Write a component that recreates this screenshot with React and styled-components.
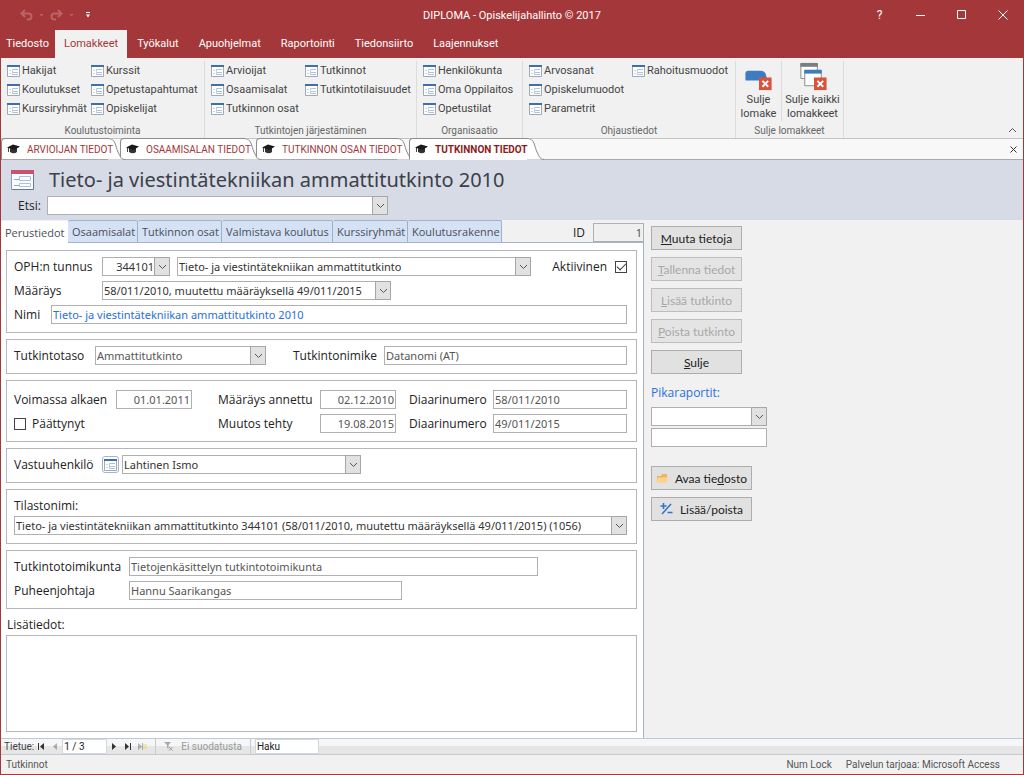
import React from "react";
import styled, { createGlobalStyle, css } from "styled-components";

const ui = `"Open Sans", "Noto Sans", sans-serif`;
const chromeFont = `Roboto, "Open Sans", sans-serif`;
const fieldFont = `"Noto Sans", "Open Sans", sans-serif`;
const buttonFont = `Lato, "Open Sans", sans-serif`;
const red = "#a4373a";

const GlobalStyle = createGlobalStyle`
  * {
    box-sizing: border-box;
  }
  body {
    margin: 0;
    font-family: ${ui};
    font-size: 12px;
    color: #222;
  }
  button, input, select, textarea {
    font: inherit;
    color: inherit;
    margin: 0;
    padding: 0;
    border: 0;
    border-radius: 0;
    background: none;
    outline: none;
  }
`;

const Window = styled.div`
  display: flex;
  flex-direction: column;
  min-height: 100vh;
  background: #f1f1f1;
  border: 1px solid ${red};
  border-top: 0;
`;

/* title bar */

const TitleBar = styled.header`
  display: grid;
  grid-template-columns: 1fr auto 1fr;
  align-items: center;
  height: 30px;
  font-family: ${chromeFont};
  background: ${red};
  color: #fff;
`;

const Title = styled.h1`
  margin: 0;
  font-size: 11px;
  font-weight: 400;
`;

const QuickAccess = styled.div`
  display: flex;
  align-items: center;
  padding-left: 19px;
`;

const IconButton = styled.button`
  display: flex;
  align-items: center;
  justify-content: center;
`;

const WindowButtons = styled.div`
  display: flex;
  justify-content: flex-end;

  button {
    width: 41px;
    height: 28px;
  }
`;

/* ribbon */

const MenuTabs = styled.nav`
  display: flex;
  height: 28px;
  font-family: ${chromeFont};
  background: ${red};
`;

const MenuTab = styled.button`
  padding: ${(p) => (p.$first ? "0 6px 0 5px" : p.$active ? "0 9px" : "0 10px")};
  font-size: 11px;
  line-height: 28px;
  color: ${(p) => (p.$active ? red : "#fff")};
  background: ${(p) => (p.$active ? "#f1f1f1" : "none")};
`;

const Ribbon = styled.div`
  display: flex;
  height: 80px;
  padding-top: 3px;
  font-family: ${chromeFont};
`;

const Group = styled.section`
  display: flex;
  flex-direction: column;
  justify-content: space-between;
  width: ${(p) => p.$w}px;
  border-right: 1px solid #dcdcdc;
`;

const GroupTitle = styled.h2`
  margin: 0;
  font-size: 10px;
  font-weight: 400;
  line-height: 15px;
  text-align: center;
  color: #666;
`;

const Commands = styled.div`
  display: grid;
  grid-template-rows: repeat(3, 19px);
  grid-template-columns: ${(p) => p.$cols};
  grid-auto-flow: column;
  padding-left: 6px;
`;

const Command = styled.button`
  display: flex;
  align-items: center;
  gap: 2px;
  font-size: 11px;
  white-space: nowrap;
  color: #444;
`;

const BigCommands = styled.div`
  display: flex;
  height: 60px;
`;

const BigCommand = styled.button`
  display: flex;
  flex-direction: column;
  align-items: center;
  width: ${(p) => p.$w}px;
  font-size: 11px;
  line-height: 14px;
  color: #444;

  & + & {
    border-left: 1px solid #dcdcdc;
  }
`;

const Collapse = styled(IconButton)`
  align-self: flex-end;
  width: 20px;
  height: 16px;
  margin: 0 1px 0 auto;
`;

/* document tabs */

const DocTabs = styled.nav`
  display: flex;
  height: 22px;
  font-family: ${chromeFont};
  background: #f8f8f8;
  border-top: 1px solid #c4c4c4;
  border-bottom: 1px solid #a8a8a8;
`;

const DocTab = styled.button`
  position: relative;
  z-index: ${(p) => p.$z};
  display: flex;
  align-items: center;
  width: ${(p) => p.$w}px;
  height: 22px;
  margin: -1px 0;
  font-size: 10px;
  font-weight: ${(p) => (p.$active ? 700 : 400)};
  color: ${(p) => (p.$active ? "#8c1c22" : red)};

  & + & {
    margin-left: -5px;
  }
  svg {
    flex: none;
  }
`;

/* long captions run on over the slanted edge */
const DocTabBody = styled.span`
  position: relative;
  z-index: 1;
  display: flex;
  flex: 1;
  align-items: center;
  gap: 6px;
  min-width: 0;
  height: 22px;
  padding-left: 5px;
  white-space: nowrap;
  background: #fff;
  border: 1px solid #8c8c8c;
  border-right: 0;
  border-bottom-color: ${(p) => (p.$active ? "#fff" : "#a8a8a8")};
  border-top-left-radius: 4px;
`;

const CloseTab = styled(IconButton)`
  width: 20px;
  margin-left: auto;
`;

/* form header */

const FormHeader = styled.div`
  display: flex;
  flex-direction: column;
  height: 60px;
  background: #d6dbe6;
`;

const FormTitle = styled.div`
  display: flex;
  align-items: center;
  gap: 15px;
  height: 36px;
  padding: 4px 0 0 10px;

  h2 {
    margin: 0;
    font-family: ${fieldFont};
    font-size: 20px;
    font-weight: 400;
    line-height: 30px;
    color: #3c4048;
  }
`;

const SearchRow = styled.div`
  display: flex;
  align-items: center;
  padding-left: 17px;
`;

/* fields */

const Label = styled.label`
  flex: none;
  width: ${(p) => (p.$w ? `${p.$w}px` : "auto")};
  padding-left: ${(p) => p.$indent || 0}px;
  font-size: 12px;
  line-height: 19px;
  white-space: nowrap;
  color: ${(p) => p.$color || "#222"};
`;

const fieldBox = css`
  width: ${(p) => (p.$w ? `${p.$w}px` : "100%")};
  height: 19px;
  border: 1px solid #b0b0b0;
  background: #fff;
  font-family: ${fieldFont};
  font-size: 11px;
  line-height: 17px;
`;

const Input = styled.input`
  ${fieldBox}
  min-width: 0;
  padding: 0 1px;
  text-align: ${(p) => (p.$right ? "right" : "left")};
  color: ${(p) => p.$color || "#555"};
`;

const ComboBox = styled.div`
  ${fieldBox}
  display: grid;
  grid-template-columns: minmax(0, 1fr) 15px;
  flex: ${(p) => (p.$w ? "none" : "1")};
  color: ${(p) => p.$color || "#333"};

  select {
    grid-area: 1 / 1 / 2 / 3;
    appearance: none;
    width: 100%;
    height: 17px;
    padding: 0 15px 0 1px;
    text-align-last: ${(p) => (p.$right ? "right" : "left")};
  }
`;

const Arrow = styled.span`
  grid-area: 1 / 2;
  display: flex;
  align-items: center;
  justify-content: center;
  margin: -1px -1px -1px 0;
  background: #e1e1e1;
  border: 1px solid #a6a6a6;
  pointer-events: none;
`;

const CheckBox = styled.input`
  appearance: none;
  flex: none;
  display: grid;
  place-items: center;
  width: 12px;
  height: 12px;
  border: 1px solid #444;
  background: #fff;

  &:checked::after {
    content: "";
    width: 8px;
    height: 4px;
    margin-top: -2px;
    border: solid #333;
    border-width: 0 0 1px 1px;
    transform: rotate(-45deg);
  }
`;

/* form body */

const Body = styled.main`
  display: flex;
  flex: 1;
`;

const FormPane = styled.form`
  display: flex;
  flex: 1;
  flex-direction: column;
  min-width: 0;
`;

const PageTabs = styled.div`
  display: flex;
  align-items: flex-end;
  height: 23px;
  border-bottom: 1px solid #a3b3c9;
`;

const PageTab = styled.button`
  height: 22px;
  padding: 0 4px;
  margin-bottom: ${(p) => (p.$active ? "-1px" : "0")};
  font-size: 11px;
  white-space: nowrap;
  color: #4a4f58;
  background: ${(p) => (p.$active ? "#fff" : "#d5e1f5")};
  border: 1px solid ${(p) => (p.$active ? "#fff" : "#9fb0c9")};
  border-width: 1px 1px 0 0;
  border-radius: 2px 2px 0 0;
  width: ${(p) => p.$w}px;
`;

const IdField = styled.div`
  display: flex;
  align-items: center;
  gap: 8px;
  margin-left: auto;

  input {
    background: #efefef;
  }
`;

const Page = styled.div`
  display: flex;
  flex: 1;
  flex-direction: column;
  gap: 6px;
  padding: 7px 6px 6px 5px;
  background: #fff;
  border-right: 1px solid #a9b2c2;
`;

const Box = styled.section`
  display: flex;
  flex-direction: column;
  gap: ${(p) => (p.$tight ? 1 : 5)}px;
  padding: ${(p) => p.$top || 6}px 9px 8px 7px;
  border: 1px solid #b4b8bc;
`;

const Row = styled.div`
  display: flex;
  align-items: center;
  gap: 7px;
`;

const DateGrid = styled.div`
  display: grid;
  grid-template-columns: 95px 76px 114px 76px 83px minmax(0, 1fr);
  gap: 5px 7px;
  align-items: center;
`;

const Check = styled.div`
  display: flex;
  align-items: center;
  gap: ${(p) => p.$gap}px;
  grid-column: ${(p) => (p.$span ? "span 2" : "auto")};
  padding-left: ${(p) => p.$indent || 0}px;
`;

const Person = styled.div`
  display: flex;
  align-items: center;
  gap: 3px;
`;

const PersonButton = styled(IconButton)`
  width: 17px;
  height: 17px;
  border: 1px solid #9db4d4;
  border-radius: 3px;
  background: #fff;
`;

const Notes = styled.div`
  display: flex;
  flex: 1;
  flex-direction: column;
  gap: 1px;

  label {
    padding-left: 1px;
  }
  textarea {
    flex: 1;
    width: 100%;
    padding: 2px;
    border: 1px solid #b4b8bc;
    resize: none;
  }
`;

/* side panel */

const SidePanel = styled.aside`
  display: flex;
  flex-direction: column;
  align-items: flex-start;
  gap: 7px;
  width: 379px;
  padding: 6px 0 0 7px;
`;

const Button = styled.button`
  display: flex;
  align-items: center;
  justify-content: center;
  gap: 7px;
  width: ${(p) => p.$w || 91}px;
  height: 24px;
  font-family: ${buttonFont};
  font-size: 12px;
  color: #222;
  background: #e1e1e1;
  border: 1px solid #adadad;
  white-space: nowrap;

  &:disabled {
    color: #a8a8a8;
    background: #e4e4e4;
    border-color: #bdbdbd;
  }
`;

const Reports = styled.div`
  display: flex;
  flex-direction: column;
  gap: 2px;
  padding: 2px 0 12px;

  label {
    padding-bottom: 3px;
  }
`;

/* bottom bars */

const RecordBar = styled.div`
  display: flex;
  align-items: center;
  height: 17px;
  padding-left: 3px;
  font-family: ${chromeFont};
  font-size: 10px;
  color: #444;
  border: solid #c3c9d1;
  border-width: 1px 0;
  background: linear-gradient(#f4f6f9 50%, #e6e6e6 50%);

  input {
    height: 15px;
    padding: 0 1px;
    font-family: ${chromeFont};
    font-size: 10px;
    line-height: 13px;
    color: #222;
    background: #fff;
    border: 1px solid #d4d8de;
  }
`;

const RecordButton = styled(IconButton)`
  width: 14px;
  height: 15px;
  opacity: ${(p) => (p.disabled ? 0.35 : 1)};
`;

const Filter = styled.button`
  display: flex;
  align-items: center;
  gap: 8px;
  height: 15px;
  margin: 0 4px 0 6px;
  padding: 0 8px;
  border: solid #c9c9c9;
  border-width: 0 1px;
  color: #999;
`;

const StatusBar = styled.footer`
  display: flex;
  align-items: center;
  gap: 14px;
  height: 19px;
  padding: 0 23px 0 5px;
  font-family: ${chromeFont};
  font-size: 10px;
  color: #555;

  span:first-child {
    margin-right: auto;
  }
`;

/* icons */

const FormIcon = () => (
  <svg width="13" height="12" viewBox="0 0 13 12">
    <path d="M.5.5h12v11H.5z" fill="#fff" stroke="#a3a9b0" />
    <path d="M0 0h13v2H0z" fill="#3e6fa8" />
    <path d="M2 5.500h2M2 8.500h2" stroke="#c5d0dc" />
    <path d="M5 4.500h6M5 7.500h6M5 9.500h6" stroke="#a9c3e2" />
    <path d="M5.500 4v6" stroke="#c5d0dc" />
  </svg>
);

const FormIconLarge = () => (
  <svg width="23" height="20" viewBox="0 0 23 20">
    <path d="M.5.5h22v19H.5z" fill="#fafcff" stroke="#8a9cc0" />
    <path d="M22.500 2v17.500H1" fill="none" stroke="#68779b" />
    <path d="M0 0h23v4H0z" fill="#c9526c" />
    <path d="M3 9.500h5M3 15.500h5" stroke="#8fa5cf" />
    <path d="M8.500 6.500h11v4h-11zM8.500 13.500h11v3h-11z" fill="#fff" stroke="#a9bfe4" />
  </svg>
);

const UndoIcon = ({ flip }) => (
  <svg width="13" height="12" viewBox="0 0 13 12" fill="none" stroke="#bd6265" strokeWidth="2">
    <g transform={flip ? "matrix(-1 0 0 1 13 0)" : undefined}>
      <path d="M5 1 1.500 4.500 5 8M2 4.500h6.500c4 0 4 6 0 6H7" />
    </g>
  </svg>
);

const DotIcon = () => (
  <svg width="17" height="12" viewBox="0 0 17 12">
    <path d="M6.500 5h4l-2 2.500z" fill="#bd6265" />
  </svg>
);

const CustomizeIcon = () => (
  <svg width="16" height="6" viewBox="-5 0 16 6" fill="#fff">
    <path d="M1 0h4v1H1zM1 2.500h4L3 5.500z" />
  </svg>
);

const CloseBadge = ({ x, y }) => (
  <g transform={`translate(${x} ${y})`}>
    <path d="M0 0h13v13H0z" fill="#d9523c" />
    <path d="m3.500 3.500 6 6m0-6-6 6" stroke="#fff" strokeWidth="2" />
  </g>
);

const CloseFormIcon = () => (
  <svg width="30" height="33" viewBox="0 0 30 33">
    <path d="M1 20v-7q0-3 3-3h13q6 0 6 10z" fill="#3f7cbf" />
    <CloseBadge x="15" y="17" />
  </svg>
);

const CloseAllIcon = () => (
  <svg width="30" height="33" viewBox="0 0 30 33">
    <path d="M2.500 3v15h17V3" fill="#fff" stroke="#8a8a8a" />
    <path d="M2 2h18v4H2z" fill="#7d7d7d" />
    <path d="M6.500 10v15.500h17V10" fill="#fff" stroke="#8a8a8a" />
    <path d="M6 9h18v4H6z" fill="#3f7cbf" />
    <CloseBadge x="16" y="17" />
  </svg>
);

const CapIcon = () => (
  <svg width="14" height="10" viewBox="0 0 14 10">
    <path d="M3 4v4q4 2.500 7 0V4z" fill="#333" />
    <path d="M0 3.500 6 .5l7 2-5.500 3.500z" fill="#1b1b1b" />
    <path d="M1.500 4v4" stroke="#444" />
  </svg>
);

const TabEdge = () => (
  <svg width="17" height="22" viewBox="0 0 17 22">
    <path d="M0 0C8 0 7 8 10 14s3 7 7 7.500H0z" fill="#fff" />
    <path d="M0 .5C8 .5 7 8 10 14s3 7 7 7.500" fill="none" stroke="#8c8c8c" />
  </svg>
);

const Chevron = ({ up }) => (
  <svg width="9" height="6" viewBox="0 0 9 6" fill="none" stroke="#555">
    <path d={up ? "M1 5l3.500-3.500L8 5" : "M1 1l3.500 3.500L8 1"} />
  </svg>
);

const FolderIcon = () => (
  <svg width="12" height="10" viewBox="0 0 12 10">
    <path d="M1 9V3h4l1-2h5v8z" fill="#eeb45f" />
    <path d="m0 9.500 2-5h10l-1 5z" fill="#fbd38d" />
  </svg>
);

const PlusMinusIcon = () => (
  <svg width="13" height="12" viewBox="0 0 13 12" fill="none" stroke="#2f74c9">
    <path d="M3.500 0v6M.5 3h6M7.500 9.500h5" strokeWidth="1.500" />
    <path d="M11 1 2 11" strokeWidth="1.500" />
  </svg>
);

const FilterIcon = () => (
  <svg width="9" height="9" viewBox="0 0 9 9">
    <path d="M0 0h7L4.500 3v4L3 6V3z" fill="#aaa" />
    <path d="m5 5 3.500 3.500m0-3.500L5 8.500" stroke="#999" />
  </svg>
);

const recordPaths = {
  first: "M1 0h1v7H1zM7 0v7L3 3.500z",
  prev: "M6 0v7L2 3.500z",
  next: "M2 0v7l4-3.500z",
  last: "M1 0v7l4-3.500zM6 0h1v7H6z",
  add: "M0 0v7l4-3.500zM4 0h1v7H4z",
};

const RecordIcon = ({ name }) => (
  <svg width="12" height="7" viewBox="-2 0 12 7" fill="#333">
    <path d={recordPaths[name]} />
    {name === "add" && <path d="M5 1h4v5H5z" fill="#f2d21b" />}
  </svg>
);

const Combo = ({ id, value, label, ...rest }) => (
  <ComboBox {...rest}>
    <select id={id} aria-label={label} defaultValue={value}>
      <option>{value}</option>
    </select>
    <Arrow>
      <Chevron />
    </Arrow>
  </ComboBox>
);

const menu = ["Tiedosto", "Lomakkeet", "Työkalut", "Apuohjelmat", "Raportointi", "Tiedonsiirto", "Laajennukset"];

const groups = [
  {
    title: "Koulutustoiminta",
    width: 204,
    cols: "84px auto",
    items: ["Hakijat", "Koulutukset", "Kurssiryhmät", "Kurssit", "Opetustapahtumat", "Opiskelijat"],
  },
  {
    title: "Tutkintojen järjestäminen",
    width: 212,
    cols: "94px auto",
    items: ["Arvioijat", "Osaamisalat", "Tutkinnon osat", "Tutkinnot", "Tutkintotilaisuudet"],
  },
  {
    title: "Organisaatio",
    width: 106,
    cols: "auto",
    items: ["Henkilökunta", "Oma Oppilaitos", "Opetustilat"],
  },
  {
    title: "Ohjaustiedot",
    width: 213,
    cols: "103px auto",
    items: ["Arvosanat", "Opiskelumuodot", "Parametrit", "Rahoitusmuodot"],
  },
];

const docTabs = [
  { text: "ARVIOIJAN TIEDOT", width: 124 },
  { text: "OSAAMISALAN TIEDOT", width: 141 },
  { text: "TUTKINNON OSAN TIEDOT", width: 158 },
  { text: "TUTKINNON TIEDOT", width: 135 },
];

const pageTabs = [
  ["Perustiedot", 67],
  ["Osaamisalat", 70],
  ["Tutkinnon osat", 84],
  ["Valmistava koulutus", 111],
  ["Kurssiryhmät", 75],
  ["Koulutusrakenne", 94],
];

export default function App() {
  return (
    <Window>
      <GlobalStyle />

      <TitleBar>
        <QuickAccess>
          <IconButton aria-label="Kumoa"><UndoIcon /></IconButton>
          <DotIcon />
          <IconButton aria-label="Toista"><UndoIcon flip /></IconButton>
          <DotIcon />
          <IconButton aria-label="Mukauta"><CustomizeIcon /></IconButton>
        </QuickAccess>
        <Title>DIPLOMA - Opiskelijahallinto © 2017</Title>
        <WindowButtons>
          <IconButton>?</IconButton>
          <IconButton aria-label="Pienennä">
            <svg width="10" height="10" stroke="#fff"><path d="M0 5.500h9" /></svg>
          </IconButton>
          <IconButton aria-label="Suurenna">
            <svg width="10" height="10" stroke="#fff" fill="none"><path d="M.5.500h8v8h-8z" /></svg>
          </IconButton>
          <IconButton aria-label="Sulje ikkuna">
            <svg width="10" height="10" stroke="#fff"><path d="m.5.500 9 9m0-9-9 9" /></svg>
          </IconButton>
        </WindowButtons>
      </TitleBar>

      <MenuTabs>
        {menu.map((item, i) => (
          <MenuTab key={item} $first={i === 0} $active={i === 1}>{item}</MenuTab>
        ))}
      </MenuTabs>

      <Ribbon>
        {groups.map((group) => (
          <Group key={group.title} $w={group.width}>
            <Commands $cols={group.cols}>
              {group.items.map((item) => (
                <Command key={item}><FormIcon />{item}</Command>
              ))}
            </Commands>
            <GroupTitle>{group.title}</GroupTitle>
          </Group>
        ))}
        <Group $w={108}>
          <BigCommands>
            <BigCommand $w={45}><CloseFormIcon />Sulje<br />lomake</BigCommand>
            <BigCommand $w={62}><CloseAllIcon />Sulje kaikki<br />lomakkeet</BigCommand>
          </BigCommands>
          <GroupTitle>Sulje lomakkeet</GroupTitle>
        </Group>
        <Collapse aria-label="Kutista valintanauha"><Chevron up /></Collapse>
      </Ribbon>

      <DocTabs>
        {docTabs.map((tab, i) => {
          const active = i === docTabs.length - 1;
          return (
            <DocTab key={tab.text} $w={tab.width} $z={active ? 9 : 5 - i} $active={active}>
              <DocTabBody $active={active}><CapIcon />{tab.text}</DocTabBody>
              <TabEdge />
            </DocTab>
          );
        })}
        <CloseTab aria-label="Sulje välilehti">
          <svg width="7" height="7" stroke="#333"><path d="m.5.500 6 6m0-6-6 6" /></svg>
        </CloseTab>
      </DocTabs>

      <FormHeader>
        <FormTitle>
          <FormIconLarge />
          <h2>Tieto- ja viestintätekniikan ammattitutkinto 2010</h2>
        </FormTitle>
        <SearchRow>
          <Label htmlFor="etsi" $w={29}>Etsi:</Label>
          <Combo id="etsi" value="" $w={341} />
        </SearchRow>
      </FormHeader>

      <Body>
        <FormPane onSubmit={(e) => e.preventDefault()}>
          <PageTabs>
            {pageTabs.map(([text, width], i) => (
              <PageTab type="button" key={text} $w={width} $active={i === 0}>{text}</PageTab>
            ))}
            <IdField>
              <Label htmlFor="id">ID</Label>
              <Input id="id" defaultValue="1" $w={51} $right />
            </IdField>
          </PageTabs>

          <Page>
            <Box>
              <Row>
                <Label htmlFor="tunnus" $w={81}>OPH:n tunnus</Label>
                <Combo id="tunnus" value="344101" $w={68} $right />
                <Combo label="Tutkinto" value="Tieto- ja viestintätekniikan ammattitutkinto" />
                <Check $gap={8} $indent={14}>
                  <Label htmlFor="aktiivinen">Aktiivinen</Label>
                  <CheckBox id="aktiivinen" type="checkbox" defaultChecked />
                </Check>
              </Row>
              <Row>
                <Label htmlFor="maarays" $w={81}>Määräys</Label>
                <Combo id="maarays" value="58/011/2010, muutettu määräyksellä 49/011/2015" $w={289} />
              </Row>
              <Row>
                <Label htmlFor="nimi" $w={30}>Nimi</Label>
                <Input id="nimi" defaultValue="Tieto- ja viestintätekniikan ammattitutkinto 2010" $color="#2a6fe0" />
              </Row>
            </Box>

            <Box>
              <Row>
                <Label htmlFor="taso" $w={74}>Tutkintotaso</Label>
                <Combo id="taso" value="Ammattitutkinto" $w={171} $color="#555" />
                <Label htmlFor="nimike" $w={104} $indent={20}>Tutkintonimike</Label>
                <Input id="nimike" defaultValue="Datanomi (AT)" />
              </Row>
            </Box>

            <Box $top={9}>
              <DateGrid>
                <Label htmlFor="alkaen">Voimassa alkaen</Label>
                <Input id="alkaen" defaultValue="01.01.2011" $right />
                <Label htmlFor="annettu" $indent={19}>Määräys annettu</Label>
                <Input id="annettu" defaultValue="02.12.2010" $right />
                <Label htmlFor="diaari1" $indent={6}>Diaarinumero</Label>
                <Input id="diaari1" defaultValue="58/011/2010" />
                <Check $gap={6} $span>
                  <CheckBox id="paattynyt" type="checkbox" />
                  <Label htmlFor="paattynyt">Päättynyt</Label>
                </Check>
                <Label htmlFor="muutos" $indent={19}>Muutos tehty</Label>
                <Input id="muutos" defaultValue="19.08.2015" $right />
                <Label htmlFor="diaari2" $indent={6}>Diaarinumero</Label>
                <Input id="diaari2" defaultValue="49/011/2015" />
              </DateGrid>
            </Box>

            <Box>
              <Row>
                <Label htmlFor="vastuu" $w={81}>Vastuuhenkilö</Label>
                <Person>
                  <PersonButton type="button" aria-label="Avaa henkilö"><FormIcon /></PersonButton>
                  <Combo id="vastuu" value="Lahtinen Ismo" $w={239} />
                </Person>
              </Row>
            </Box>

            <Box $tight>
              <Label htmlFor="tilasto">Tilastonimi:</Label>
              <Row>
                <Combo
                  id="tilasto"
                  value="Tieto- ja viestintätekniikan ammattitutkinto 344101 (58/011/2010, muutettu määräyksellä 49/011/2015) (1056)"
                />
              </Row>
            </Box>

            <Box>
              <Row>
                <Label htmlFor="toimikunta" $w={108}>Tutkintotoimikunta</Label>
                <Input id="toimikunta" defaultValue="Tietojenkäsittelyn tutkintotoimikunta" $w={409} />
              </Row>
              <Row>
                <Label htmlFor="pj" $w={108}>Puheenjohtaja</Label>
                <Input id="pj" defaultValue="Hannu Saarikangas" $w={273} />
              </Row>
            </Box>

            <Notes>
              <Label htmlFor="lisatiedot">Lisätiedot:</Label>
              <textarea id="lisatiedot" />
            </Notes>
          </Page>
        </FormPane>

        <SidePanel>
          <Button><span><u>M</u>uuta tietoja</span></Button>
          <Button disabled><span><u>T</u>allenna tiedot</span></Button>
          <Button disabled><span><u>L</u>isää tutkinto</span></Button>
          <Button disabled><span><u>P</u>oista tutkinto</span></Button>
          <Button><span><u>S</u>ulje</span></Button>
          <Reports>
            <Label htmlFor="raportti" $color="#2a6fe0">Pikaraportit:</Label>
            <Combo id="raportti" value="" $w={116} />
            <Input aria-label="Raportin ehto" $w={116} />
          </Reports>
          <Button $w={101}><FolderIcon /><span>Avaa tie<u>d</u>osto</span></Button>
          <Button $w={101}><PlusMinusIcon /><span>Lisää/poista</span></Button>
        </SidePanel>
      </Body>

      <RecordBar>
        <label htmlFor="tietue">Tietue:</label>
        <RecordButton aria-label="Ensimmäinen"><RecordIcon name="first" /></RecordButton>
        <RecordButton aria-label="Edellinen" disabled><RecordIcon name="prev" /></RecordButton>
        <Input id="tietue" defaultValue="1 / 3" $w={45} />
        <RecordButton aria-label="Seuraava"><RecordIcon name="next" /></RecordButton>
        <RecordButton aria-label="Viimeinen"><RecordIcon name="last" /></RecordButton>
        <RecordButton aria-label="Uusi" disabled><RecordIcon name="add" /></RecordButton>
        <Filter disabled><FilterIcon />Ei suodatusta</Filter>
        <Input aria-label="Haku" defaultValue="Haku" $w={64} />
      </RecordBar>

      <StatusBar>
        <span>Tutkinnot</span>
        <span>Num Lock</span>
        <span>Palvelun tarjoaa: Microsoft Access</span>
      </StatusBar>
    </Window>
  );
}
